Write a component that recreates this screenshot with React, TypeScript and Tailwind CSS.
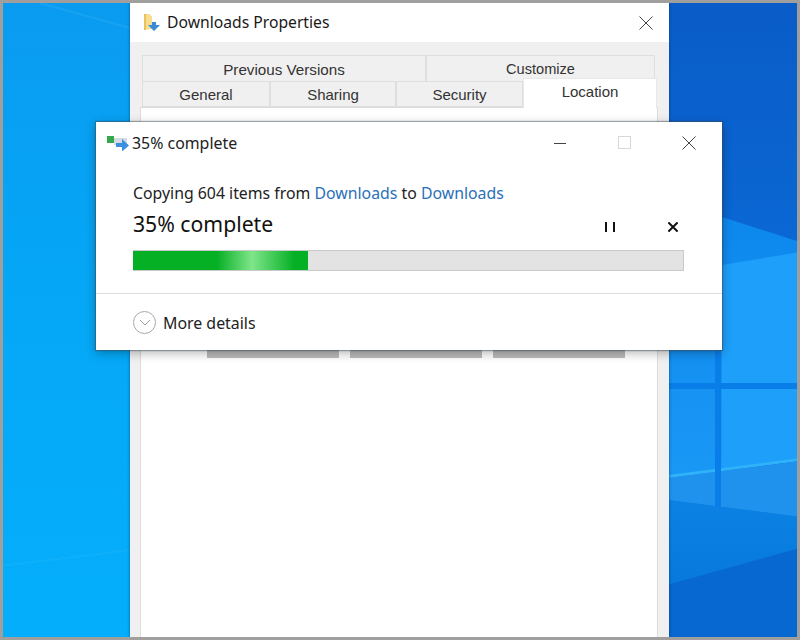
const topTabs = [
    { label: "Previous Versions", width: "w-[284px]", text: "text-[15.200px]" },
    { label: "Customize", width: "w-[229px]", text: "text-[14.600px]" },
];

const bottomTabs = [
    { label: "General", width: "w-[128px]" },
    { label: "Sharing", width: "w-[126px]" },
    { label: "Security", width: "w-[127px]" },
];

const Wallpaper = () => (
    <svg className="absolute inset-0" width="800" height="640" viewBox="0 0 800 640">
        <defs>
            <linearGradient id="left" x1="0" y1="0" x2="0" y2="1">
                <stop offset="0" stopColor="#0a9bf0" />
                <stop offset="0.5" stopColor="#05a8f6" />
                <stop offset="1" stopColor="#04aefb" />
            </linearGradient>
            <linearGradient id="sky" x1="0" y1="0" x2="0" y2="1">
                <stop offset="0" stopColor="#0a5cc8" />
                <stop offset="1" stopColor="#0a7ae6" />
            </linearGradient>
            <linearGradient id="pane" x1="0" y1="0" x2="0" y2="1">
                <stop offset="0" stopColor="#0c86ec" />
                <stop offset="1" stopColor="#1a98f6" />
            </linearGradient>
            <linearGradient id="floor" x1="0" y1="0" x2="0" y2="1">
                <stop offset="0" stopColor="#0b82e4" />
                <stop offset="1" stopColor="#0672d8" />
            </linearGradient>
        </defs>
        <rect width="800" height="640" fill="url(#left)" />
        <polyline points="40,3 130,28" stroke="#34aef5" strokeWidth="2" fill="none" opacity="0.35" />
        <polyline points="0,566 130,550" stroke="#22b6fc" strokeWidth="2" fill="none" opacity="0.35" />
        <rect x="660" y="0" width="140" height="640" fill="url(#sky)" />
        <polygon points="660,197 800,242 800,460 660,480" fill="url(#pane)" />
        <polygon points="722,265 800,252 800,460 722,470" fill="#1d9ffa" />
        <polygon points="660,476 800,458 800,461 660,479" fill="#2fb2f8" />
        <polygon points="660,479 800,461 800,517 660,499" fill="#1f92ee" />
        <polygon points="660,499 800,517 800,640 660,640" fill="url(#floor)" />
        <polygon points="660,587 800,548 800,640 660,640" fill="#0668d0" />
        <rect x="715" y="340" width="6" height="167" fill="#0a7ee8" />
        <rect x="660" y="383" width="140" height="6" fill="#0a7ee8" />
    </svg>
);

const FolderIcon = () => (
    <svg width="20" height="20" viewBox="0 0 20 20" className="shrink-0">
        <path d="M1 1h6l1 2h1v13l-8 1z" fill="#f6dd92" />
        <path d="M1 1h2v16H1z" fill="#e9c25c" />
        <path d="M9 9h4v3h4l-6 6-6-6h4z" fill="#3b8ad6" />
    </svg>
);

const CopyIcon = () => (
    <svg width="24" height="16" viewBox="0 0 24 16" className="shrink-0">
        <rect x="0" y="1" width="7" height="7" fill="#34a84a" />
        <rect x="7" y="3" width="13" height="7" fill="#d5dbe2" />
        <path d="M9 8h6V4l7 6.500-7 6V12H9z" fill="#3a8fe0" />
    </svg>
);

const CloseIcon = ({ size, stroke, width }: { size: number; stroke: string; width: number }) => (
    <svg width={size} height={size} viewBox="0 0 14 14" className="shrink-0">
        <path d="M0.500 0.500L13.500 13.500M13.500 0.500L0.500 13.500" stroke={stroke} strokeWidth={width} fill="none" />
    </svg>
);

const PauseIcon = () => (
    <svg width="10" height="10" viewBox="0 0 10 10" className="shrink-0">
        <rect x="0" y="0" width="2" height="10" fill="#111111" />
        <rect x="8" y="0" width="2" height="10" fill="#111111" />
    </svg>
);

const App = () => {
    return (
        <div className="relative w-[800px] h-[640px] overflow-hidden bg-[#9e9e9e]" style={{ fontFamily: '"Noto Sans", sans-serif' }}>
            <Wallpaper />

            {/* photo frame round the shot */}
            <div className="absolute inset-0 border-[3px] border-[#a09f9e] z-30 pointer-events-none" />

            {/* properties window */}
            <div className="absolute left-[130px] top-[3px] w-[539px] h-[634px] bg-[#f0f0f0] flex flex-col shadow-[0_0_3px_rgba(0,40,90,0.6)]">
                <div className="h-[39px] shrink-0 bg-white flex items-center pl-[13px] pr-[16px] gap-[4px]">
                    <FolderIcon />
                    <span className="text-[15.700px] text-[#1a1a1a] flex-1 mt-[1px]">Downloads Properties</span>
                    <CloseIcon size={14} stroke="#444444" width={1} />
                </div>
                <div className="flex-1 flex flex-col pl-[10px] pr-[11px] pt-[13px]" style={{ fontFamily: '"Liberation Sans", sans-serif' }}>
                    <div className="flex pl-[2px] h-[26px] shrink-0">
                        {topTabs.map((tab) => (
                            <div key={tab.label} className={`${tab.width} ${tab.text} border border-b-0 border-[#dedede] flex items-center justify-center text-[#333333] pt-[3px]`}>
                                {tab.label}
                            </div>
                        ))}
                    </div>
                    <div className="flex pl-[2px] h-[26px] shrink-0 relative">
                        {bottomTabs.map((tab) => (
                            <div key={tab.label} className={`${tab.width} border border-[#dedede] flex items-center justify-center text-[15px] text-[#333333] pt-[3px]`}>
                                {tab.label}
                            </div>
                        ))}
                        <div className="w-[134px] h-[30px] mt-[-3px] bg-white border border-b-0 border-[#e8e8e8] flex items-start justify-center text-[15px] text-[#333333] pt-[2px] z-10">
                            Location
                        </div>
                    </div>
                    <div className="flex-1 bg-white border border-[#dcdcdc] border-b-0 flex gap-[11px] pt-[242px] pl-[66px]">
                        <div className="w-[132px] h-[8px] bg-[#bcbcbc]" />
                        <div className="w-[132px] h-[8px] bg-[#bcbcbc]" />
                        <div className="w-[132px] h-[8px] bg-[#bcbcbc]" />
                    </div>
                </div>
            </div>

            {/* copy progress dialog */}
            <div className="absolute left-[96px] top-[122px] w-[626px] h-[228px] bg-white z-20 flex flex-col shadow-[0_0_1px_1px_rgba(60,70,80,0.45),0_3px_10px_rgba(0,0,0,0.3)]">
                <div className="h-[42px] shrink-0 flex items-center pl-[11px] pr-[26px]">
                    <CopyIcon />
                    <span className="text-[15.900px] text-[#222222] flex-1 ml-[1px] mt-[2px]">35% complete</span>
                    <div className="w-[12px] h-px bg-[#444444] mr-[52px]" />
                    <div className="w-[13px] h-[13px] border border-[#d8d8d8] mr-[51px] mt-[-1px]" />
                    <CloseIcon size={14} stroke="#444444" width={1} />
                </div>
                <div className="flex-1 flex flex-col pl-[37px] pt-[18px]">
                    <div className="text-[15.830px] leading-[22px] text-[#222222]">
                        Copying 604 items from <span className="text-[#2a6fb8]">Downloads</span> to <span className="text-[#2a6fb8]">Downloads</span>
                    </div>
                    <div className="flex items-center mt-[5px] h-[30px] pr-[44px]">
                        <span className="text-[21.200px] text-[#111111] flex-1">35% complete</span>
                        <div className="mt-[6px]">
                            <PauseIcon />
                        </div>
                        <div className="ml-[53px] mt-[6px]">
                            <CloseIcon size={10} stroke="#111111" width={2.800} />
                        </div>
                    </div>
                    <div className="mt-[11px] h-[21px] w-[551px] bg-[#e3e3e3] border border-l-0 border-[#c9c9c9]">
                        <div className="h-full w-[175px] bg-[linear-gradient(90deg,#06b025_0%,#06b025_48%,#7fe58a_68%,#06b025_92%)]" />
                    </div>
                </div>
                <div className="h-[57px] shrink-0 border-t border-[#dddddd] flex items-center pl-[37px] gap-[7px]">
                    <div className="size-[23px] rounded-full border border-[#a8a8a8] flex items-center justify-center">
                        <svg width="12" height="7" viewBox="0 0 12 7">
                            <path d="M1 1l5 5 5-5" stroke="#a0a0a0" strokeWidth="1" fill="none" />
                        </svg>
                    </div>
                    <span className="text-[15.900px] text-[#222222] mt-[4px]">More details</span>
                </div>
            </div>
        </div>
    );
};

export default App;
